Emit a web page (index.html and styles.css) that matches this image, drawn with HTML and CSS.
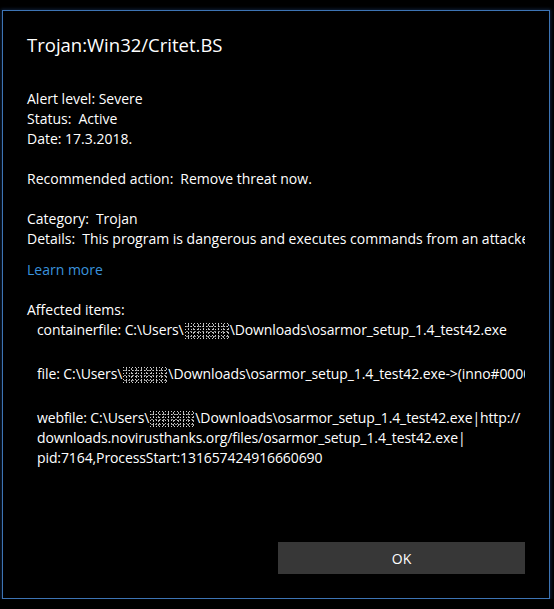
FILE: index.html
```html
<!DOCTYPE html>
<html lang="en">
<head>
<meta charset="utf-8">
<title>Trojan:Win32/Critet.BS</title>
<link rel="stylesheet" href="styles.css">
</head>
<body>
<div class="dialog">
  <div class="content">
    <h1 class="title">Trojan:Win32/Critet.BS</h1>

    <div class="block first">
      <div class="line">Alert level: Severe</div>
      <div class="line">Status:<span class="gap"></span>Active</div>
      <div class="line">Date: 17.3.2018.</div>
    </div>

    <div class="block">
      <div class="line">Recommended action:<span class="gap"></span>Remove threat now.</div>
    </div>

    <div class="block">
      <div class="line">Category:<span class="gap"></span>Trojan</div>
      <div class="line clip">Details:<span class="gap"></span>This program is dangerous and executes commands from an attacker.</div>
    </div>

    <a class="learn" href="#">Learn more</a>

    <div class="block affected">
      <div class="line">Affected items:</div>
      <div class="item item-first">
        <div class="line">containerfile: C:\Users\<span class="blur"></span>\Downloads\osarmor_setup_1.4_test42.exe</div>
      </div>
      <div class="item">
        <div class="line clip">file: C:\Users\<span class="blur"></span>\Downloads\osarmor_setup_1.4_test42.exe-&gt;(inno#0000000)</div>
      </div>
      <div class="item">
        <div class="line">webfile: C:\Users\<span class="blur"></span>\Downloads\osarmor_setup_1.4_test42.exe|http://</div>
        <div class="line">downloads.novirusthanks.org/files/osarmor_setup_1.4_test42.exe|</div>
        <div class="line">pid:7164,ProcessStart:131657424916660690</div>
      </div>
    </div>
  </div>

  <div class="actions">
    <button class="ok" type="button">OK</button>
  </div>
</div>
</body>
</html>
```

FILE: styles.css
```css
html, body {
  margin: 0;
  padding: 0;
  background: #000;
}

body {
  padding: 10px 0 0 2px;
  font-family: "Open Sans", "Noto Sans", "Liberation Sans", sans-serif;
  color: #fff;
  font-size: 14px;
}

.dialog {
  box-sizing: border-box;
  width: 548px;
  height: 589px;
  border: 1px solid #3d74b4;
  box-shadow: 0 0 3px 1px rgba(40, 90, 160, 0.35);
  background: #000;
  padding: 20px 24px 0 24px;
  display: flex;
  flex-direction: column;
}

.content {
  flex: 1;
  min-width: 0;
}

.title {
  margin: 0;
  font-weight: 400;
  font-size: 18.5px;
  line-height: 28px;
}

.block {
  margin-top: 20px;
}

.block.first {
  margin-top: 30px;
}

.line {
  line-height: 20px;
  white-space: nowrap;
}

.gap {
  display: inline-block;
  width: 7px;
}

.clip {
  overflow: hidden;
}

.learn {
  display: block;
  margin-top: 11px;
  color: #3a93dd;
  text-decoration: none;
  line-height: 20px;
  width: max-content;
}

.affected .item {
  padding-left: 10px;
  margin-top: 24px;
  letter-spacing: -0.1px;
}

.affected .item.item-first {
  margin-top: 0;
}

.blur {
  display: inline-block;
  width: 46px;
  height: 17px;
  vertical-align: -4px;
  background-image:
    radial-gradient(circle, rgba(230,230,230,0.9) 0.6px, transparent 1px),
    radial-gradient(circle, rgba(180,180,180,0.8) 0.5px, transparent 1px),
    radial-gradient(circle, rgba(255,255,255,0.7) 0.5px, transparent 1px);
  background-size: 3px 3px, 4px 5px, 5px 4px;
  background-position: 0 0, 1px 2px, 2px 1px;
}

.actions {
  display: flex;
  justify-content: flex-end;
  padding-bottom: 24px;
}

.ok {
  width: 247px;
  height: 32px;
  border: none;
  background: #373737;
  color: #fff;
  font-family: inherit;
  font-size: 14px;
  padding: 0;
  cursor: pointer;
}
```
